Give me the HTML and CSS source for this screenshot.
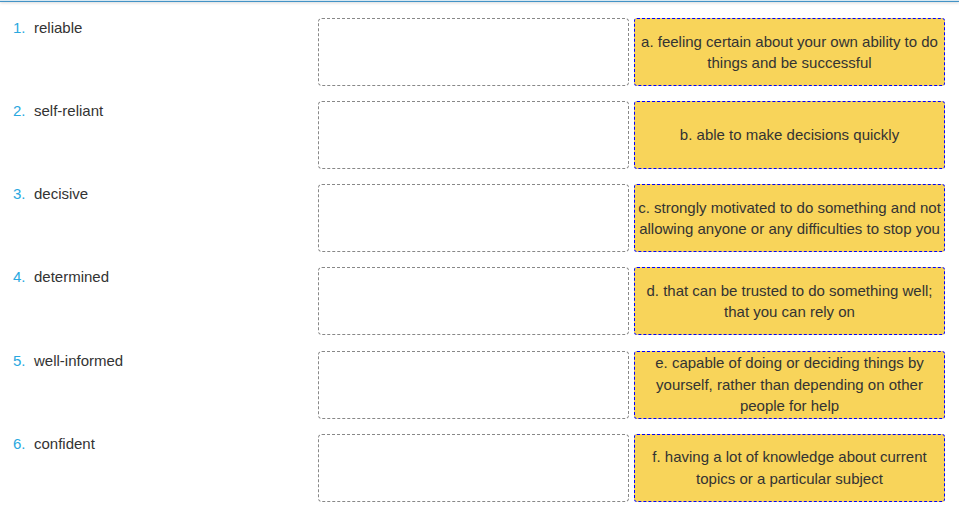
FILE: index.html
```html
<!DOCTYPE html>
<html>
<head>
<meta charset="utf-8">
<link rel="stylesheet" href="styles.css">
</head>
<body>
<div class="topbar"></div>
<div class="matching">
  <div class="row">
    <div class="term"><span class="num">1.</span><span class="word">reliable</span></div>
    <div class="drop"></div>
    <div class="def">a. feeling certain about your own ability to do things and be successful</div>
  </div>
  <div class="row">
    <div class="term"><span class="num">2.</span><span class="word">self-reliant</span></div>
    <div class="drop"></div>
    <div class="def">b. able to make decisions quickly</div>
  </div>
  <div class="row">
    <div class="term"><span class="num">3.</span><span class="word">decisive</span></div>
    <div class="drop"></div>
    <div class="def">c. strongly motivated to do something and not allowing anyone or any difficulties to stop you</div>
  </div>
  <div class="row">
    <div class="term"><span class="num">4.</span><span class="word">determined</span></div>
    <div class="drop"></div>
    <div class="def">d. that can be trusted to do something well; that you can rely on</div>
  </div>
  <div class="row">
    <div class="term"><span class="num">5.</span><span class="word">well-informed</span></div>
    <div class="drop"></div>
    <div class="def">e. capable of doing or deciding things by yourself, rather than depending on other people for help</div>
  </div>
  <div class="row">
    <div class="term"><span class="num">6.</span><span class="word">confident</span></div>
    <div class="drop"></div>
    <div class="def">f. having a lot of knowledge about current topics or a particular subject</div>
  </div>
</div>
</body>
</html>
```
FILE: styles.css
```css
html, body {
  margin: 0;
  padding: 0;
  background: #fff;
}
body {
  font-family: "Liberation Sans", Arial, sans-serif;
  font-size: 15px;
  line-height: 21.5px;
  color: #333;
}
.topbar {
  height: 1px;
  border-top: 1px solid #d6e8f2;
  background: #4393c6;
  box-shadow: 0 1px 3px rgba(0, 0, 0, 0.18);
}
.matching {
  padding: 16px 0 0 13px;
  display: flex;
  flex-direction: column;
  gap: 15.16px;
}
.row {
  display: flex;
  align-items: stretch;
  height: 68px;
}
.term {
  width: 305px;
  display: flex;
  align-items: flex-start;
  line-height: 19px;
}
.num {
  width: 21px;
  color: #29a8e0;
}
.word {
  color: #333;
}
.drop {
  width: 311px;
  box-sizing: border-box;
  border: 1px dashed #888;
  border-radius: 4px;
}
.def {
  width: 311px;
  margin-left: 5px;
  box-sizing: border-box;
  border: 1px dashed #0000ff;
  border-radius: 3px;
  background: #f8d45a;
  display: flex;
  align-items: center;
  justify-content: center;
  text-align: center;
  padding: 0 3px;
}
```
